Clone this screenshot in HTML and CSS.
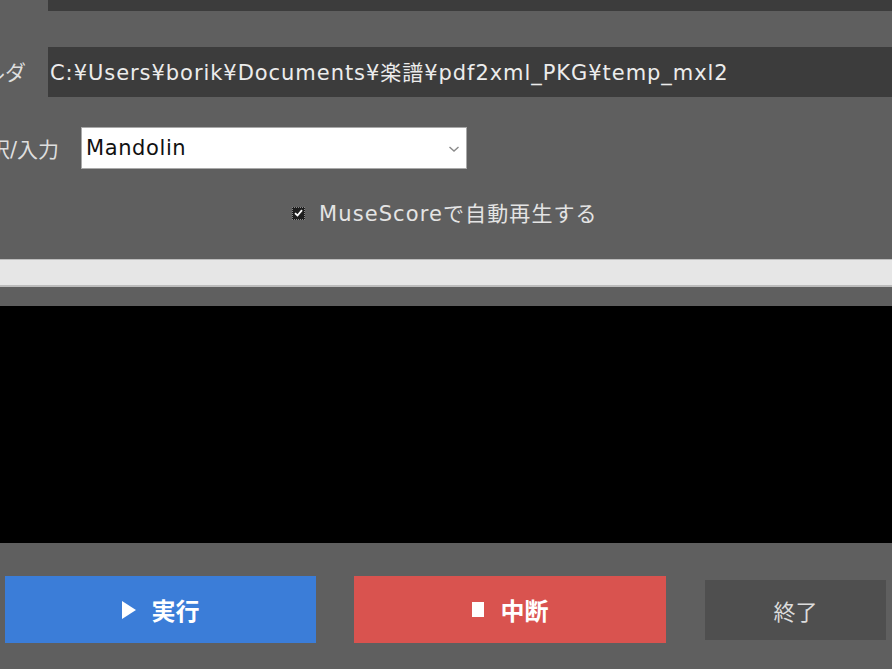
FILE: index.html
```html
<!DOCTYPE html>
<html lang="ja">
<head>
<meta charset="utf-8">
<title>pdf2xml</title>
<link rel="stylesheet" href="styles.css">
</head>
<body>
<div class="app">
  <div class="form">
    <div class="row row-top">
      <div class="lbl lbl-a"></div>
      <div class="field field-top"></div>
    </div>
    <div class="row row-path">
      <label class="lbl lbl-a"><span>出力フォルダ</span></label>
      <div class="field field-path">C:¥Users¥borik¥Documents¥楽譜¥pdf2xml_PKG¥temp_mxl2</div>
    </div>
    <div class="row row-select">
      <label class="lbl lbl-b"><span>楽器選択/入力</span></label>
      <div class="select">
        <span class="select-text">Mandolin</span>
        <svg class="chev" width="12" height="8" viewBox="0 0 12 8"><path d="M1.5 2 L6 6 L10.5 2" fill="none" stroke="#8a8a8a" stroke-width="1.4"/></svg>
      </div>
    </div>
    <div class="check-row">
      <span class="cb"><svg width="9" height="8" viewBox="0 0 9 8"><path d="M1 4.2 L3.5 6.5 L8 1.2" fill="none" stroke="#ffffff" stroke-width="1.8"/></svg></span>
      <span class="cb-text">MuseScoreで自動再生する</span>
    </div>
  </div>
  <div class="progress"></div>
  <div class="console"></div>
  <div class="buttons">
    <button class="btn btn-run"><span class="tri"></span>実行</button>
    <button class="btn btn-stop"><span class="sq"></span>中断</button>
    <button class="btn btn-exit">終了</button>
  </div>
</div>
</body>
</html>
```
FILE: styles.css
```css
html, body {
  margin: 0;
  padding: 0;
  background: #5f5f5f;
  width: 892px;
  height: 669px;
  overflow: hidden;
}
.app {
  font-family: "DejaVu Sans", "Noto Sans CJK JP", sans-serif;
  color: #e2e2e2;
  display: flex;
  flex-direction: column;
}
.form {
  display: flex;
  flex-direction: column;
}
.row {
  display: flex;
  align-items: center;
}
.row-top { height: 11px; }
.row-path { margin-top: 36px; height: 50px; }
.row-select { margin-top: 30px; height: 42px; }
.lbl {
  flex: none;
  display: flex;
  justify-content: flex-end;
  overflow: hidden;
  white-space: nowrap;
  font-size: 21px;
  color: #dedede;
}
.lbl-a { width: 48px; }
.lbl-a span { margin-right: 22px; margin-bottom: 3px; }
.lbl-b { width: 81px; }
.lbl-b span { margin-right: 22px; }
.field {
  flex: 1;
  background: #3c3c3c;
  height: 100%;
  box-sizing: border-box;
}
.field-path {
  display: flex;
  align-items: center;
  padding-left: 2px;
  padding-bottom: 3px;
  font-size: 21px;
  letter-spacing: 0.95px;
  color: #ececec;
  white-space: nowrap;
  overflow: hidden;
}
.select {
  width: 386px;
  height: 42px;
  box-sizing: border-box;
  background: #ffffff;
  border: 1px solid #a9a9a9;
  display: flex;
  align-items: center;
  justify-content: space-between;
  padding: 0 6px 0 4px;
}
.select-text {
  font-size: 21px;
  letter-spacing: 0.6px;
  color: #111111;
}
.chev { margin-top: 1px; }
.check-row {
  margin-top: 31px;
  height: 26px;
  display: flex;
  align-items: center;
  padding-left: 292px;
}
.cb {
  width: 13px;
  height: 13px;
  box-sizing: border-box;
  background: #1e1e1e;
  border: 1px dotted #888888;
  display: flex;
  align-items: center;
  justify-content: center;
  margin-right: 14px;
}
.cb-text {
  font-size: 21px;
  letter-spacing: 1.1px;
  color: #e4e4e4;
  margin-bottom: 2px;
}
.progress {
  margin-top: 33px;
  height: 28px;
  box-sizing: border-box;
  background: #e6e6e6;
  border-top: 1px solid #bcbcbc;
  border-bottom: 2px solid #bcbcbc;
}
.console {
  margin-top: 19px;
  height: 237px;
  background: #000000;
}
.buttons {
  display: flex;
  align-items: center;
  padding: 7px 0 0 5px;
  height: 126px;
  box-sizing: border-box;
  gap: 38px;
}
.btn {
  border: none;
  font-family: "Noto Sans CJK JP", "Noto Sans", sans-serif;
  font-size: 24px;
  display: flex;
  align-items: center;
  justify-content: center;
  padding: 0;
}
.btn-run {
  width: 311px;
  height: 67px;
  background: #3b7dd8;
  color: #ffffff;
  font-weight: bold;
}
.btn-stop {
  width: 312px;
  height: 67px;
  background: #d9534f;
  color: #ffffff;
  font-weight: bold;
}
.btn-exit {
  width: 181px;
  height: 60px;
  margin-left: 1px;
  background: #4f4f4f;
  color: #dcdcdc;
  font-size: 22px;
}
.tri {
  width: 0;
  height: 0;
  border-top: 9px solid transparent;
  border-bottom: 9px solid transparent;
  border-left: 14px solid #ffffff;
  margin-right: 16px;
}
.sq {
  width: 12px;
  height: 15px;
  background: #ffffff;
  margin-right: 17px;
}
```
